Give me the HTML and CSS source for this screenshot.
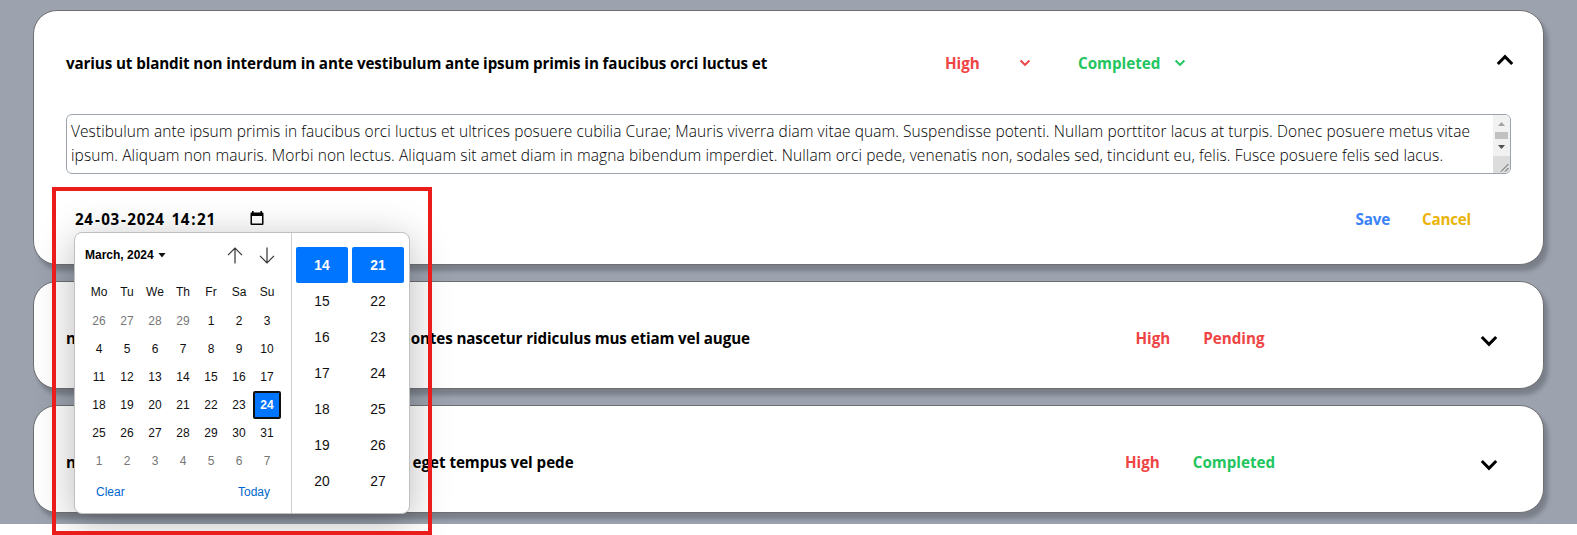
FILE: index.html
```html
<!DOCTYPE html>
<html lang="en">
<head>
<meta charset="utf-8">
<title>Tasks</title>
<link rel="stylesheet" href="styles.css">
</head>
<body>
<main class="board">
  <section class="card card-open">
    <header class="edit-head">
      <h2 class="title">varius ut blandit non interdum in ante vestibulum ante ipsum primis in faucibus orci luctus et</h2>
      <div class="select select-priority red"><span>High</span><svg width="12" height="8" viewBox="0 0 12 8"><path d="M1.6 1.5 6 5.9 10.4 1.5"/></svg></div>
      <div class="select select-status green"><span>Completed</span><svg width="12" height="8" viewBox="0 0 12 8"><path d="M1.6 1.5 6 5.9 10.4 1.5"/></svg></div>
      <svg class="toggle" width="18" height="12" viewBox="0 0 18 12"><path d="M1.8 10 9 2.6 16.2 10"/></svg>
    </header>
    <div class="note">
      <p class="note-text">Vestibulum ante ipsum primis in faucibus orci luctus et ultrices posuere cubilia Curae; Mauris viverra diam vitae quam. Suspendisse potenti. Nullam porttitor lacus at turpis. Donec posuere metus vitae<br><span class="line-two">ipsum. Aliquam non mauris. Morbi non lectus. Aliquam sit amet diam in magna bibendum imperdiet. Nullam orci pede, venenatis non, sodales sed, tincidunt eu, felis. Fusce posuere felis sed lacus.</span></p>
      <div class="scroll">
        <svg class="track" width="17" height="41" viewBox="0 0 17 41"><path fill="#a3a3a3" d="M5 11 8.5 7 12 11z"/><path fill="#c1c1c1" d="M2 17h13v7H2z"/><path fill="#505050" d="M5 30h7l-3.500 4z"/></svg>
        <svg class="grip" width="17" height="17" viewBox="0 0 17 17"><path fill="none" stroke="#555" d="M8 15.500 15.500 8M12 15.500 15.500 12"/></svg>
      </div>
    </div>
    <footer class="edit-foot">
      <div class="datetime"><span>24</span><i>-</i><span>03</span><i>-</i><span>2024</span><span class="hour">14</span><i>:</i><span>21</span>
        <svg width="14" height="15" viewBox="0 0 14 15"><path fill="#000" fill-rule="evenodd" d="M2 0h1.600v1.500h6.800V0H12v1.500h.500q1 0 1 1V13q0 1-1 1h-11q-1 0-1-1V2.500q0-1 1-1H2zM2 5v7.600h10V5z"/></svg>
      </div>
      <div class="actions"><span class="blue">Save</span><span class="amber">Cancel</span></div>
    </footer>
  </section>

  <section class="card card-row">
    <h2 class="title">natoque penatibus et magnis dis parturient montes nascetur ridiculus mus etiam vel augue</h2>
    <div class="tags"><span class="red">High</span><span class="red">Pending</span></div>
    <svg class="toggle" width="18" height="12" viewBox="0 0 18 12"><path d="M1.800 2 9 9.400 16.200 2"/></svg>
  </section>

  <section class="card card-row">
    <h2 class="title title-last">nulla integer pede justo lacinia eget tincidunt eget tempus vel pede</h2>
    <div class="tags"><span class="red">High</span><span class="green">Completed</span></div>
    <svg class="toggle" width="18" height="12" viewBox="0 0 18 12"><path d="M1.800 2 9 9.400 16.200 2"/></svg>
  </section>
</main>

<div class="picker">
  <div class="calendar">
    <div class="cal-head">
      <b>March, 2024</b>
      <svg width="8" height="5" viewBox="0 0 8 5"><path fill="#101010" d="M.5 0h7L4 4.500z"/></svg>
      <span class="arrows">
        <svg width="16" height="17" viewBox="0 0 16 17"><path d="M8 16.500V1.200M1 8.200 8 1.200 15 8.200"/></svg>
        <svg width="16" height="17" viewBox="0 0 16 17"><path d="M8 .500V15.800M1 8.800 8 15.800 15 8.800"/></svg>
      </span>
    </div>
    <div class="days">
      <span>Mo</span><span>Tu</span><span>We</span><span>Th</span><span>Fr</span><span>Sa</span><span>Su</span>
    </div>
    <div class="days dates">
      <span class="out">26</span><span class="out">27</span><span class="out">28</span><span class="out">29</span><span>1</span><span>2</span><span>3</span>
      <span>4</span><span>5</span><span>6</span><span>7</span><span>8</span><span>9</span><span>10</span>
      <span>11</span><span>12</span><span>13</span><span>14</span><span>15</span><span>16</span><span>17</span>
      <span>18</span><span>19</span><span>20</span><span>21</span><span>22</span><span>23</span><span class="picked">24</span>
      <span>25</span><span>26</span><span>27</span><span>28</span><span>29</span><span>30</span><span>31</span>
      <span class="out">1</span><span class="out">2</span><span class="out">3</span><span class="out">4</span><span class="out">5</span><span class="out">6</span><span class="out">7</span>
    </div>
    <div class="cal-foot"><span>Clear</span><span>Today</span></div>
  </div>
  <div class="time">
    <span class="on">14</span><span class="on">21</span>
    <span>15</span><span>22</span>
    <span>16</span><span>23</span>
    <span>17</span><span>24</span>
    <span>18</span><span>25</span>
    <span>19</span><span>26</span>
    <span>20</span><span>27</span>
  </div>
</div>
<div class="highlight"></div>
</body>
</html>
```
FILE: styles.css
```css
* { box-sizing: border-box; }
body {
  margin: 0;
  background: #fff;
  color: #000;
  font: 700 15.2px/24px "Open Sans", "Noto Sans", sans-serif;
  overflow: hidden;
}
svg { display: block; flex: none; }
.board {
  height: 524px;
  padding: 10px 33px 0;
  background: #9ca3af;
  display: flex;
  flex-direction: column;
  gap: 16px;
  overflow: hidden;
}
.card {
  flex: none;
  width: 1511px;
  background: #fff;
  border: 1px solid #6f6f72;
  border-radius: 24px;
  box-shadow: 4px 6px 4px rgba(0, 0, 0, 0.22);
}
.card-open { height: 255px; padding: 0 32px; }
.card-row {
  height: 108px;
  padding: 0 44px 0 32px;
  display: flex;
  align-items: center;
}
.title { margin: 0; font-size: inherit; letter-spacing: -0.12px; white-space: nowrap; }
.title-last { letter-spacing: -0.05px; }
.card-row .title { margin-top: 6px; }
.red { color: #ef4444; }
.green { color: #22c55e; }
.blue { color: #3b82f6; }
.amber { color: #eab308; }

.edit-head { height: 103px; padding-top: 40px; display: flex; }
.edit-head .title { width: 879px; }
.select { display: flex; justify-content: space-between; height: 24px; }
.select svg { margin-top: 8px; fill: none; stroke: currentColor; stroke-width: 2; }
.select-priority { width: 86px; margin-right: 47px; }
.select-status { width: 108px; }
.toggle { fill: none; stroke: #000; stroke-width: 3; }
.edit-head .toggle { margin: 3px -3px 0 auto; }

.note {
  width: 1445px;
  height: 60px;
  border: 1px solid #9ca3af;
  border-radius: 6px;
  display: flex;
  justify-content: space-between;
  overflow: hidden;
}
.note-text {
  margin: 0;
  padding: 4px 0 0 4px;
  font-weight: 300;
  font-size: 15.5px;
  letter-spacing: 0.075px;
  white-space: nowrap;
}
.line-two { letter-spacing: 0.1px; }
.scroll { width: 17px; flex: none; }
.track { background: #f1f1f1; }
.grip { background: #dcdcdc; }

.edit-foot { display: flex; justify-content: space-between; padding: 33px 40px 0 9px; }
.datetime { display: flex; letter-spacing: 0.6px; }
.datetime i { font-style: normal; padding: 0 0.8px 0 1.3px; }
.datetime .hour { margin-left: 7px; }
.datetime svg { margin: 4px 0 0 34px; }
.actions { display: flex; gap: 32px; letter-spacing: -0.2px; }

.tags { margin-left: auto; width: 284px; display: flex; justify-content: center; gap: 33px; padding: 6px 0 0; }
.card-row .toggle { margin: 11px 1px 0 138px; }

.picker {
  position: absolute;
  left: 74px;
  top: 232px;
  width: 336px;
  height: 282px;
  display: flex;
  background: #fff;
  border: 1px solid #bfbfbf;
  border-radius: 8px;
  box-shadow: 0 8px 40px rgba(0, 0, 0, 0.28);
  font: 12px/28px "Liberation Sans", Arial, sans-serif;
  color: #101010;
}
.calendar { width: 217px; padding: 8px 9px 0 10px; border-right: 1px solid #cfcfcf; }
.cal-head { display: flex; align-items: center; height: 28px; color: #000; }
.cal-head b { width: 73px; white-space: nowrap; }
.arrows { margin-left: auto; margin-right: 7px; display: flex; gap: 16px; }
.arrows svg { fill: none; stroke: #333; stroke-width: 1.2; }
.days { display: grid; grid-template-columns: repeat(7, 28px); grid-auto-rows: 28px; text-align: center; padding-top: 9px; }
.dates { padding-top: 1px; }
.out { color: #767676; }
.picked {
  background: #0075ff;
  color: #fff;
  font-weight: 700;
  border: 2px solid #101010;
  border-radius: 2px;
  line-height: 24px;
}
.cal-foot { display: flex; justify-content: space-between; padding: 3px 12px 0 11px; color: #0067ce; }
.time {
  flex: 1;
  display: grid;
  grid-template-columns: 52px 52px;
  column-gap: 4px;
  grid-auto-rows: 36px;
  padding: 14px 0 0 4px;
  font-size: 13.8px;
  line-height: 37px;
  text-align: center;
}
.on { background: #0075ff; color: #fff; font-weight: 700; border-radius: 2px; }
.highlight {
  position: absolute;
  left: 52px;
  top: 187px;
  width: 380px;
  height: 348px;
  border: 4px solid #ea1c1c;
}
```
